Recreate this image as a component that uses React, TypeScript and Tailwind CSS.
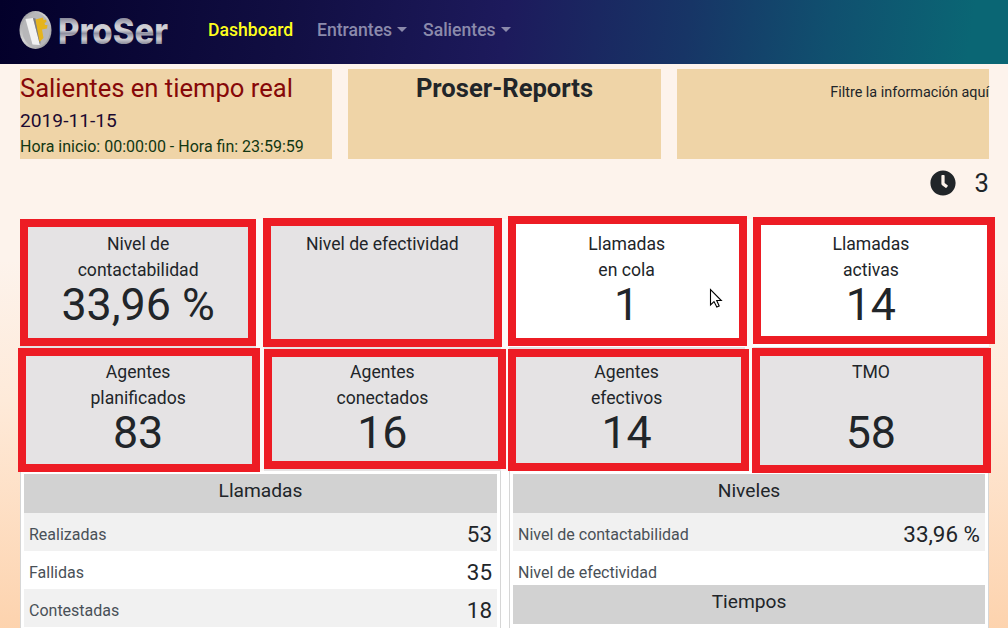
import React from "react";

type Stat = { lines: string[]; value: string; active?: boolean; frame: string };

const stats: Stat[] = [
  { lines: ["Nivel de", "contactabilidad"], value: "33,96 %", frame: "left-0 top-0 w-[236px] h-[127px]" },
  { lines: ["Nivel de efectividad"], value: "", frame: "left-[-1px] top-[-1px] w-[239px] h-[129px]" },
  { lines: ["Llamadas", "en cola"], value: "1", active: true, frame: "left-[-1px] top-[-3px] w-[239px] h-[130px]" },
  { lines: ["Llamadas", "activas"], value: "14", active: true, frame: "left-0 top-[-2px] w-[242px] h-[127px]" },
  { lines: ["Agentes", "planificados"], value: "83", frame: "left-[-2px] top-[1px] w-[242px] h-[124px]" },
  { lines: ["Agentes", "conectados"], value: "16", frame: "left-0 top-[2px] w-[242px] h-[120px]" },
  { lines: ["Agentes", "efectivos"], value: "14", frame: "left-[-1px] top-[2px] w-[241px] h-[122px]" },
  { lines: ["TMO"], value: "58", frame: "left-[-1px] top-[1px] w-[239px] h-[125px]" },
];

function Logo() {
  return (
    <svg className="h-[64px] w-[160px] shrink-0" viewBox="0 0 160 64">
      <defs>
        <linearGradient id="disc" x1="0" y1="0" x2="1" y2="1">
          <stop offset="0" stopColor="#8d8d92" />
          <stop offset="0.45" stopColor="#d5d5d5" />
          <stop offset="1" stopColor="#8e8e90" />
        </linearGradient>
        <linearGradient id="metal" gradientUnits="userSpaceOnUse" x1="0" y1="16" x2="0" y2="44">
          <stop offset="0" stopColor="#77778c" />
          <stop offset="0.35" stopColor="#cfcfd4" />
          <stop offset="0.5" stopColor="#d2d2d6" />
          <stop offset="0.62" stopColor="#8f8fa0" />
          <stop offset="0.82" stopColor="#cfcfd4" />
          <stop offset="1" stopColor="#8a8a9a" />
        </linearGradient>
      </defs>
      <ellipse cx="20.500" cy="30" rx="16" ry="19" fill="url(#disc)" />
      <ellipse cx="21" cy="30" rx="13.800" ry="17" fill="#b7b7b9" />
      <path d="M10.500 19L18 18L25 45L17.500 44.500Z" fill="#f2f2f2" />
      <path d="M18 18L20.500 18.500L25.500 42L25 45Z" fill="#7c7c80" />
      <path d="M20.500 19.500L28 17.500L28.500 20L31 19.500L31.500 22L29.500 23L30 25L32.500 25L32 28.500L27 29.500L28.500 38L24.500 42Z" fill="#e5b41d" />
      <text x="43" y="43.500" textLength="110" lengthAdjust="spacingAndGlyphs" fontFamily="Inter, sans-serif" fontSize="36" fontWeight="800" fill="url(#metal)">ProSer</text>
    </svg>
  );
}

function Caret() {
  return <span className="mb-[5px] ml-[5px] inline-block border-x-[5px] border-t-[5px] border-x-transparent border-t-current align-middle" />;
}

function Heading({ children }: { children: React.ReactNode }) {
  return <div className="h-[39px] bg-[#d2d2d2] text-center text-[19.2px] leading-[33px]">{children}</div>;
}

function Row({ label, value, shade, h = "h-[38px]" }: { label: string; value: string; shade?: boolean; h?: string }) {
  return (
    <div className={`flex justify-between px-[5px] ${h} ${shade ? "bg-[#f1f1f1]" : ""}`}>
      <span className="pt-[3px] text-[16px] leading-[38px] text-[#495057]">{label}</span>
      <span className="pt-[1px] text-[22.4px] leading-[40px]">{value}</span>
    </div>
  );
}

export default function App() {
  return (
    <div className="relative flex h-[628px] w-[1008px] flex-col overflow-hidden bg-[linear-gradient(180deg,#fdf3ec_0px,#fdf3ec_260px,#feead9_400px,#fdd3ae_628px)] font-['Roboto',sans-serif] text-[#212529]">
      <nav className="flex h-16 shrink-0 items-center bg-[linear-gradient(98deg,#03002a_0%,#110e42_28%,#1d1a5c_50%,#173566_68%,#10506f_82%,#0a6674_96%)] pl-[15px] text-[17.6px] font-medium text-[#8b8aab]">
        <Logo />
        <span className="mt-[-3px] ml-[33px] w-[109px] text-[#ffff1c]">Dashboard</span>
        <span className="mt-[-3px] w-[106px] whitespace-nowrap">Entrantes<Caret /></span>
        <span className="mt-[-3px] whitespace-nowrap">Salientes<Caret /></span>
      </nav>

      <header className="mx-5 mt-[5px] grid h-[90px] w-[969px] shrink-0 grid-cols-3 gap-x-4">
        <div className="bg-[#efd4a7]">
          <h1 className="pt-[3px] text-[25.6px] leading-[32px] text-[#860808]">Salientes en tiempo real</h1>
          <p className="text-[19.2px] leading-[34px] text-[#1c0a31]">2019-11-15</p>
          <p className="text-[16px] leading-[17px] text-[#123712]">Hora inicio: 00:00:00 - Hora fin: 23:59:59</p>
        </div>
        <div className="bg-[#efd4a7] pt-[3px] text-center text-[25.6px] leading-[32px] font-bold">Proser-Reports</div>
        <div className="bg-[#efd4a7] pt-[14px] text-right text-[14.4px] leading-[20px]">Filtre la información aquí</div>
      </header>

      <div className="mr-[19px] flex h-[60px] shrink-0 items-start justify-end">
        <svg className="mt-[11px] h-[26px] w-[26px]" viewBox="0 0 512 512" fill="#212529">
          <path d="M256 8C119 8 8 119 8 256s111 248 248 248 248-111 248-248S393 8 256 8zm92.500 313l-20 25a16 16 0 0 1-22.500 2.500l-67-49.700a40 40 0 0 1-15-31.200V112a16 16 0 0 1 16-16h32a16 16 0 0 1 16 16v144l58 42.500a16 16 0 0 1 2.500 22.500z" />
        </svg>
        <span className="ml-[19px] pt-[8px] text-[25.6px] leading-[32px]">3</span>
      </div>

      <section className="mx-5 grid w-[969px] shrink-0 grid-cols-4 grid-rows-[128px_124px] gap-x-2 bg-[#fcf9f8]">
        {stats.map((s, i) => (
          <div key={i} className={`relative flex flex-col items-center pt-3 ${s.active ? "bg-white" : "bg-[#e5e3e4]"}`}>
            <div className="h-[52px] text-center text-[17.6px] leading-[26px]">
              {s.lines.map((l) => <div key={l}>{l}</div>)}
            </div>
            <div className="text-[44.8px] leading-[44px]">{s.value}</div>
            <div className={`absolute z-10 border-8 border-[#ed1c24] ${s.frame}`} />
          </div>
        ))}
      </section>

      <section className="mx-5 flex h-[157px] w-[969px] shrink-0 justify-between bg-white">
        <div className="w-[481px] border-x border-[#d6d6d6] px-[3px] pt-[3px]">
          <Heading>Llamadas</Heading>
          <Row label="Realizadas" value="53" shade />
          <Row label="Fallidas" value="35" />
          <Row label="Contestadas" value="18" shade />
        </div>
        <div className="w-[480px] border-x border-[#d6d6d6] px-[3px] pt-[3px]">
          <Heading>Niveles</Heading>
          <Row label="Nivel de contactabilidad" value="33,96 %" shade />
          <Row label="Nivel de efectividad" value="" h="h-[34px]" />
          <Heading>Tiempos</Heading>
        </div>
      </section>

      <svg className="absolute top-[288px] left-[709px] z-20 h-[20px] w-[14px]" viewBox="0 0 14 20">
        <path d="M1.500 1.500V17L5 13.600L7.800 19L10.200 18L7.700 12.500H12.300Z" fill="white" stroke="black" strokeWidth="1.100" />
      </svg>
    </div>
  );
}
